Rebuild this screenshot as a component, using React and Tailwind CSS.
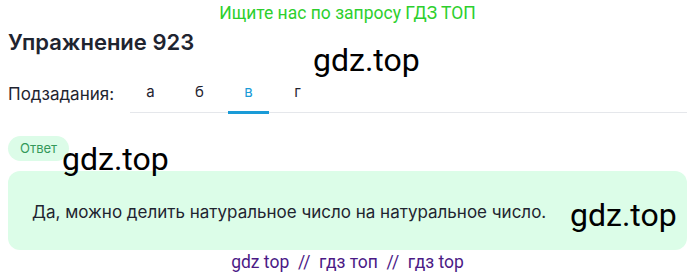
import React from "react"

const TABS = ['а', 'б', 'в', 'г']
const ACTIVE = 'в'

const Watermark = ({className}) => (
    <div className={`absolute text-[32px] leading-none text-black font-['Roboto',sans-serif] pointer-events-none ${className}`}>
        gdz.top
    </div>
)

export default function App() {
    return (
        <div className="relative w-[695px] h-[277px] bg-white font-['Inter',sans-serif] text-[#1f2430] overflow-hidden">
            <div className="pt-[2px] text-center text-[17.5px] leading-[22px] text-[#2dcf2d] font-['Roboto',sans-serif]">
                Ищите нас по запросу ГДЗ ТОП
            </div>

            <div className="px-2">
                <h1 className="mt-[4px] text-[22px] leading-[28px] font-semibold">Упражнение 923</h1>

                <div className="mt-[25px] flex items-end">
                    <div className="pb-[8px] text-[17px] leading-[22px] w-[122px]">Подзадания:</div>
                    <div className="flex-1 flex gap-[8px] border-b border-[#e5e7eb]">
                        {TABS.map(t => (
                            <div key={t}
                                 className={`w-[41px] text-center pb-[8px] text-[15px] leading-[22px] ${t === ACTIVE ? 'text-[#1a9bd7] border-b-[3px] border-[#1a9bd7] -mb-[2px]' : ''}`}>
                                {t}
                            </div>
                        ))}
                    </div>
                </div>

                <div className="mt-[23px] inline-block rounded-full bg-[#dcfce8] px-[12px] py-[5px] text-[13px] leading-[15px] text-[#33995a]">
                    Ответ
                </div>

                <div className="mt-[10px] rounded-[12px] bg-[#dcfde8] h-[79px] flex items-center px-6 pt-[3px] text-[17px] leading-[22px]">
                    Да, можно делить натуральное число на натуральное число.
                </div>

                <div className="mt-[1px] text-center text-[17.5px] leading-[22px] text-[#4b1a86] font-['Roboto',sans-serif]">
                    gdz top&nbsp; //&nbsp; гдз топ&nbsp; //&nbsp; гдз top
                </div>
            </div>

            <Watermark className="left-[313px] top-[44px]" />
            <Watermark className="left-[62px] top-[143px]" />
            <Watermark className="left-[570px] top-[199px]" />
        </div>
    )
}
